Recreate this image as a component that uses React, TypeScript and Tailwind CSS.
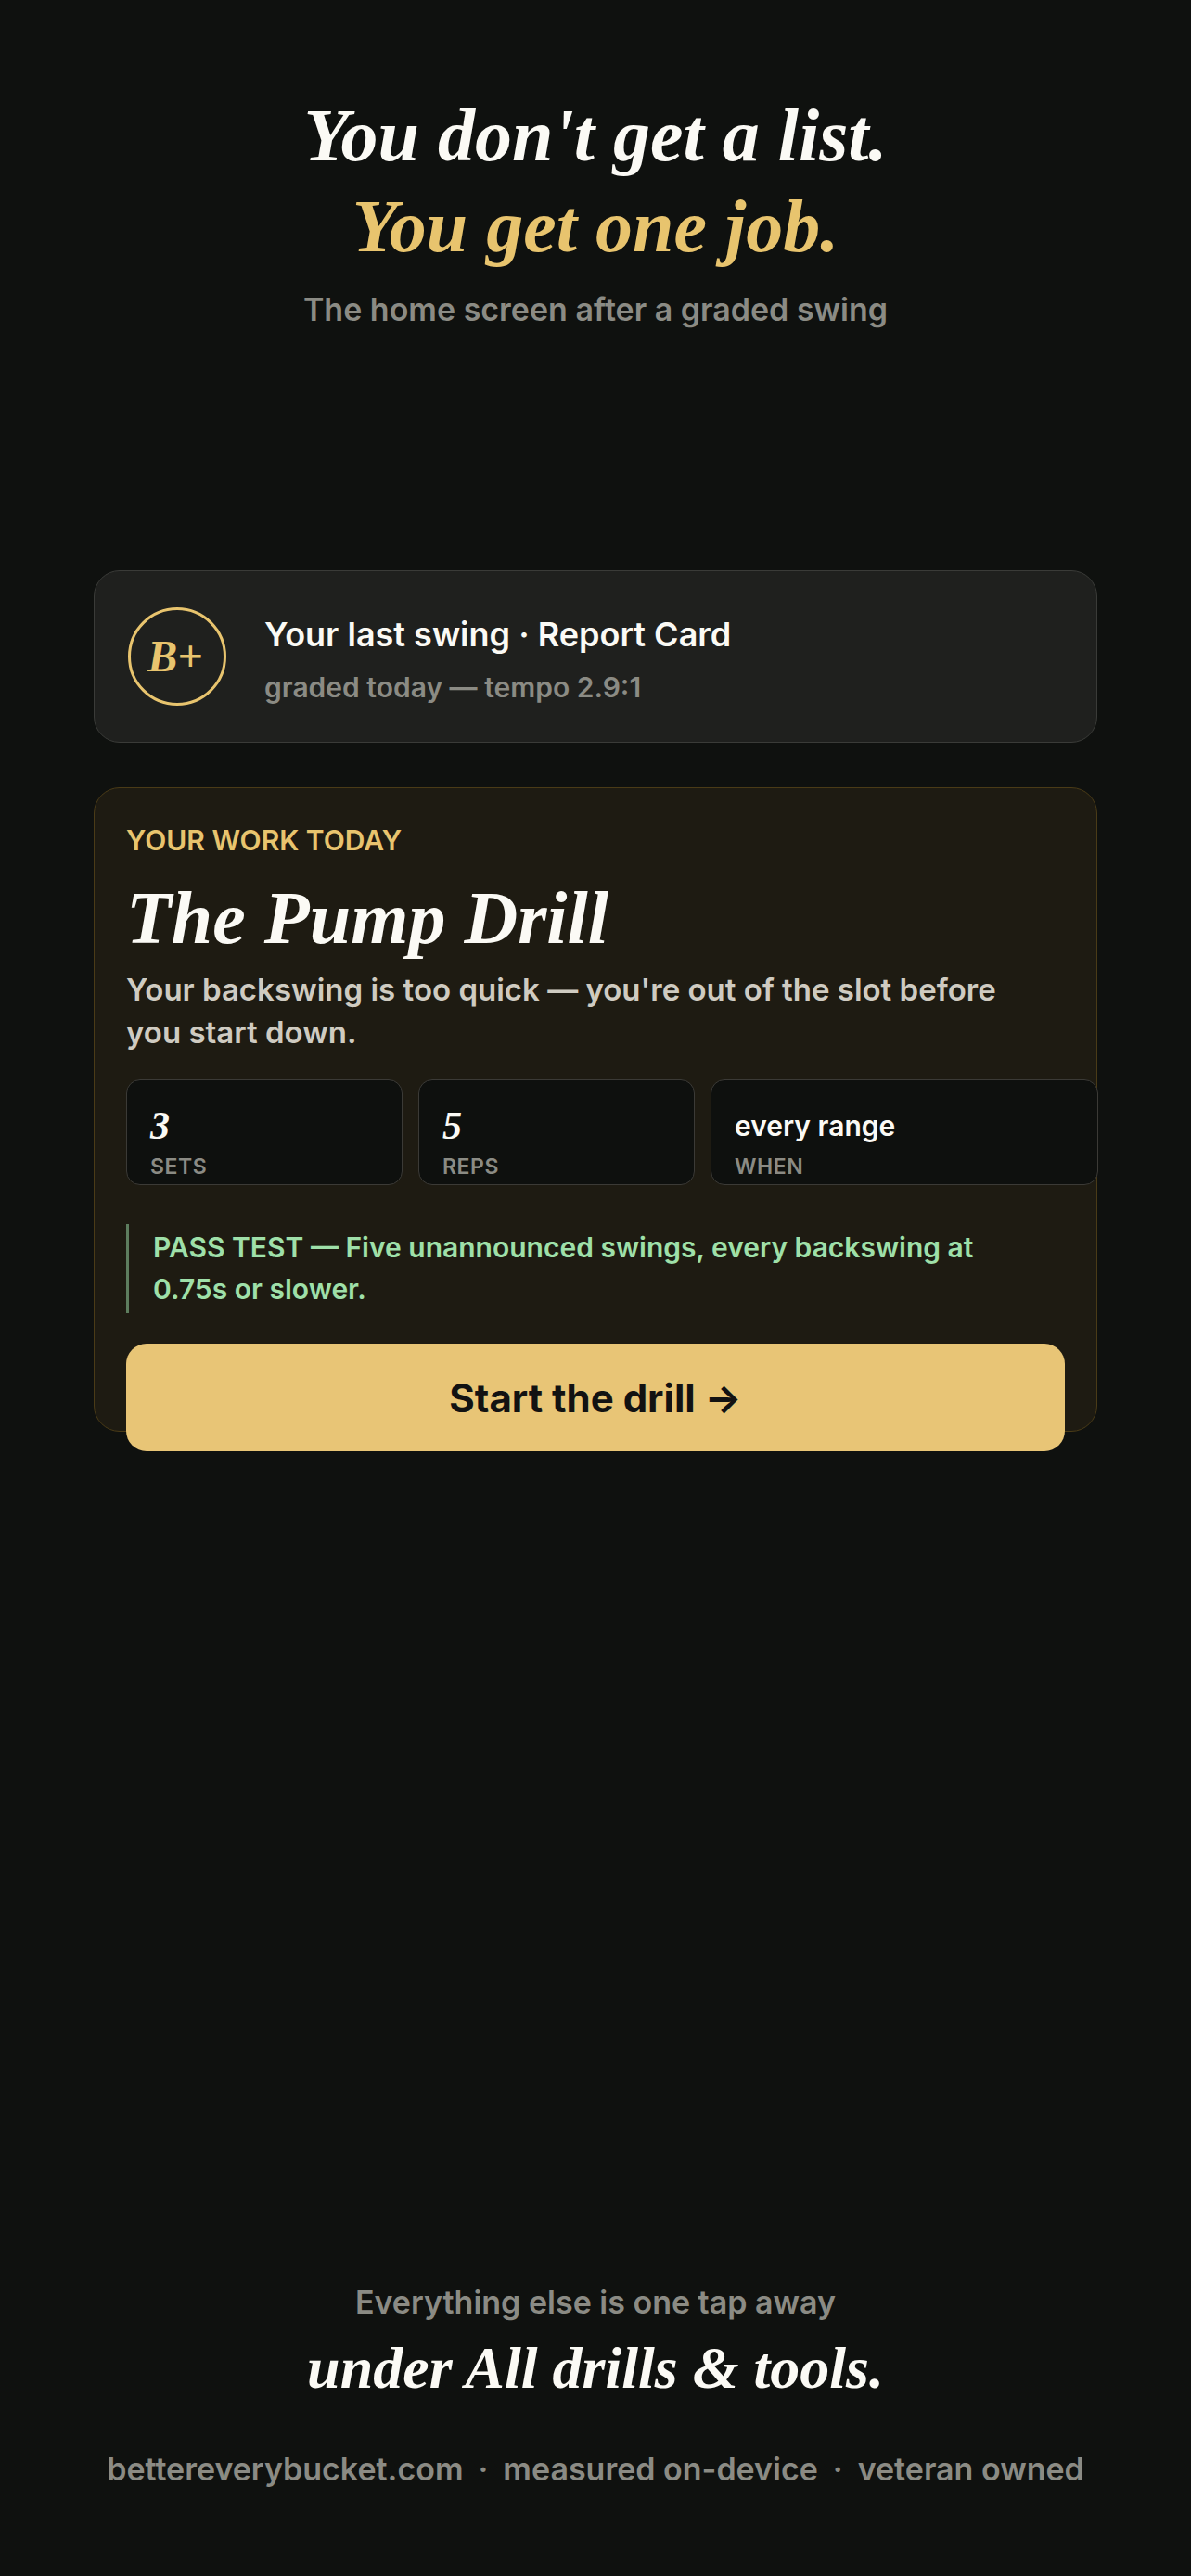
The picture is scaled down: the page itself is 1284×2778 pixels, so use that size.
import React from 'react';

const serif = 'font-["Liberation_Serif",Georgia,serif] italic font-bold';
const sans = 'font-["Inter","Noto_Sans",sans-serif]';

function StatBox({ value, label, serifValue }: { value: string; label: string; serifValue?: boolean }) {
    return (
        <div className="h-[114px] rounded-[15px] border border-[#3b3a36] bg-[#0e100e] pl-[25px] pt-[26px]">
            <div
                className={
                    serifValue
                        ? `${serif} text-[42px] leading-[46px] text-[#fbfaf5]`
                        : 'text-[30px] leading-[46px] font-semibold text-[#fbfaf5]'
                }
            >
                {value}
            </div>
            <div className="mt-[9px] text-[23px] leading-[24px] font-semibold tracking-wide text-[#8b8b84] uppercase">{label}</div>
        </div>
    );
}

export default function App() {
    return (
        <div className={`${sans} min-h-[2778px] bg-[#0f110f] px-[101px] flex flex-col`}>
            <header className="pt-[97px] text-center">
                <h1 className={`${serif} text-[80px] leading-[98px] text-[#fbfaf5]`}>You don't get a list.</h1>
                <h1 className={`${serif} text-[80px] leading-[98px] text-[#e8c46e]`}>You get one job.</h1>
                <p className="mt-[19px] text-[34px] leading-[44px] font-semibold text-[#8b8b84]">
                    The home screen after a graded swing
                </p>
            </header>

            {/* last swing */}
            <div className="mt-[259px] h-[186px] rounded-[28px] border border-[#3a3b38] bg-[#1f201e] flex items-center pl-[36px] gap-[41px]">
                <div className="w-[106px] h-[106px] rounded-full border-[3px] border-[#e8c46e] flex items-center justify-center">
                    <span className={`${serif} text-[48px] text-[#e8c46e] pr-[4px]`}>B+</span>
                </div>
                <div className="mt-[6px] flex flex-col gap-[14px]">
                    <div className="text-[36px] leading-[46px] font-semibold text-[#fbfaf5]">Your last swing · Report Card</div>
                    <div className="text-[30px] leading-[40px] font-semibold text-[#8b8b84]">graded today — tempo 2.9:1</div>
                </div>
            </div>

            {/* today's drill */}
            <div className="mt-[48px] h-[695px] rounded-[28px] border border-[#4a3b17] bg-[#1e1b12] px-[34px] pt-[35px]">
                <div className="text-[30px] leading-[42px] font-semibold text-[#e8c46e] uppercase">Your work today</div>
                <h2 className={`${serif} mt-[15px] text-[80px] leading-[96px] text-[#fbfaf5]`}>The Pump Drill</h2>
                <p className="mt-[6px] max-w-[960px] text-[33px] leading-[46px] font-semibold text-[#cfcbc1]">
                    Your backswing is too quick — you're out of the slot before you start down.
                </p>

                <div className="mt-[28px] grid grid-cols-[298px_298px_418px] gap-[17px]">
                    <StatBox value="3" label="Sets" serifValue />
                    <StatBox value="5" label="Reps" serifValue />
                    <StatBox value="every range" label="When" />
                </div>

                <div className="mt-[42px] border-l-[3px] border-[#5d7d5e] pl-[26px] py-[3px]">
                    <p className="max-w-[920px] text-[30px] leading-[45px] font-semibold text-[#9fe0a9]">
                        PASS TEST — Five unannounced swings, every backswing at 0.75s or slower.
                    </p>
                </div>

                <button className="mt-[33px] w-full h-[116px] rounded-[22px] bg-[#e8c576] text-[42px] font-bold text-[#121212]">
                    Start the drill →
                </button>
            </div>

            <footer className="mt-[915px] text-center">
                <p className="text-[34px] leading-[48px] font-semibold text-[#8b8b84]">Everything else is one tap away</p>
                <p className={`${serif} mt-[5px] text-[64px] leading-[84px] text-[#fbfaf5]`}>under All drills &amp; tools.</p>
                <p className="mt-[45px] text-[34px] leading-[44px] font-semibold text-[#8b8b84]">
                    bettereverybucket.com<span className="mx-[16px]">·</span>measured on-device<span className="mx-[16px]">·</span>veteran owned
                </p>
            </footer>
        </div>
    );
}
